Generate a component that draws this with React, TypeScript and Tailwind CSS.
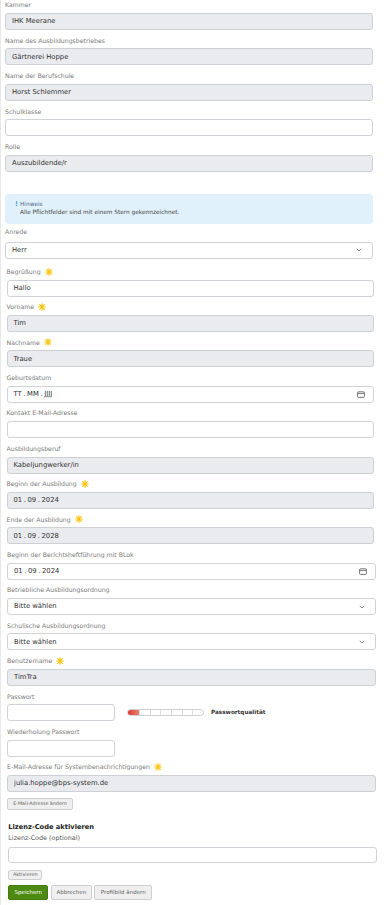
import React from "react";

const FONT = { fontFamily: '"DejaVu Sans", Verdana, sans-serif' };

function Star() {
  return (
    <svg width="8" height="8" viewBox="0 0 16 16" className="ml-[4px]">
      <g stroke="#f6c200" strokeWidth="2.4" strokeLinecap="round">
        <line x1="8" y1="1.5" x2="8" y2="14.5" />
        <line x1="1.5" y1="8" x2="14.5" y2="8" />
        <line x1="3.4" y1="3.4" x2="12.6" y2="12.6" />
        <line x1="12.6" y1="3.4" x2="3.4" y2="12.6" />
      </g>
    </svg>
  );
}

function Chevron() {
  return (
    <svg width="6" height="4" viewBox="0 0 6 4" className="ml-auto mr-[4px]">
      <path d="M0.8 0.8 L3 3 L5.2 0.8" fill="none" stroke="#777" strokeWidth="0.9" />
    </svg>
  );
}

function Calendar() {
  return (
    <svg width="8" height="7" viewBox="0 0 8 7" className="ml-auto mr-[2px]">
      <rect x="0.6" y="0.8" width="6.8" height="5.6" rx="0.8" fill="none" stroke="#555" strokeWidth="0.8" />
      <line x1="0.6" y1="2.4" x2="7.4" y2="2.4" stroke="#555" strokeWidth="0.8" />
    </svg>
  );
}

function Label({ text, star }: { text: string; star?: boolean }) {
  return (
    <div className="h-[10px] flex items-center text-[6.2px] text-[#7a7a7a] whitespace-nowrap">
      {text}
      {star && <Star />}
    </div>
  );
}

function Box({
  value,
  disabled,
  children,
  className = "h-[17px]",
}: {
  value?: React.ReactNode;
  disabled?: boolean;
  children?: React.ReactNode;
  className?: string;
}) {
  return (
    <div
      className={
        "rounded-[3px] border flex items-center px-[6px] text-[6.8px] text-[#333] whitespace-nowrap " +
        (disabled ? "bg-[#e9ebee] border-[#cdd1d5] " : "bg-white border-[#cfd3d7] ") +
        className
      }
    >
      {value}
      {children}
    </div>
  );
}

function DateText({ d, m, y }: { d: string; m: string; y: string }) {
  return (
    <span className="flex gap-[1.6px]">
      <span>{d}</span>
      <span>.</span>
      <span>{m}</span>
      <span>.</span>
      <span>{y}</span>
    </span>
  );
}

function Field({
  label,
  star,
  children,
}: {
  label: string;
  star?: boolean;
  children: React.ReactNode;
}) {
  return (
    <div className="flex flex-col mb-[5.4px]">
      <Label text={label} star={star} />
      <div className="mt-[3px]">{children}</div>
    </div>
  );
}

function StrengthBar() {
  return (
    <div className="ml-[12px] w-[77px] h-[7px] rounded-full border border-[#d0d0d0] bg-white flex overflow-hidden">
      <div className="w-[11px] h-full bg-gradient-to-r from-[#d83a35] to-[#ee7b70]" />
      {[0, 1, 2, 3, 4, 5].map((i) => (
        <div key={i} className="flex-1 h-full border-l border-[#dcdcdc]" />
      ))}
    </div>
  );
}

function GrayButton({ text, className = "" }: { text: string; className?: string }) {
  return (
    <div
      className={
        "flex items-center justify-center rounded-[2px] border border-[#cfcfcf] bg-[#efefef] text-[#666] whitespace-nowrap " +
        className
      }
    >
      {text}
    </div>
  );
}

export default function App() {
  return (
    <div className="min-h-[905px] w-[385px] bg-white relative flex flex-col" style={FONT}>
      <div className="absolute left-0 top-0 bottom-0 w-px bg-[#e8e8e8]" />
      {/* Section A */}
      <div className="ml-[5px] w-[368px] flex flex-col">
        <Field label="Kammer">
          <Box disabled value="IHK Meerane" />
        </Field>
        <Field label="Name des Ausbildungsbetriebes">
          <Box disabled value="Gärtnerei Hoppe" />
        </Field>
        <Field label="Name der Berufschule">
          <Box disabled value="Horst Schlemmer" />
        </Field>
        <Field label="Schulklasse">
          <Box />
        </Field>
        <Field label="Rolle">
          <Box disabled value="Auszubildende/r" />
        </Field>

        <div className="mt-[16.6px] mb-[3px] h-[30px] rounded-[4px] bg-[#e0f1fc] pl-[10px] pt-[7px] text-[5.8px]">
          <div className="h-[8px] flex items-center">
            <span className="w-[5px] text-[#3d9ee0] font-bold text-[6.5px]">!</span>
            <span className="text-[#4d6584]">Hinweis</span>
          </div>
          <div className="h-[8px] flex items-center pl-[5px] text-[#444]">
            Alle Pflichtfelder sind mit einem Stern gekennzeichnet.
          </div>
        </div>

        <div className="flex flex-col mb-[8px]">
          <Label text="Anrede" />
          <div className="mt-[5px]">
            <Box value="Herr">
              <Chevron />
            </Box>
          </div>
        </div>
      </div>

      {/* Section B */}
      <div className="ml-[6.5px] w-[367.5px] flex flex-col">
        <Field label="Begrüßung" star>
          <Box value="Hallo" />
        </Field>
        <Field label="Vorname" star>
          <Box disabled value="Tim" />
        </Field>
        <Field label="Nachname" star>
          <Box disabled value="Traue" />
        </Field>
        <Field label="Geburtsdatum">
          <Box>
            <DateText d="TT" m="MM" y="JJJJ" />
            <Calendar />
          </Box>
        </Field>
        <Field label="Kontakt E-Mail-Adresse">
          <Box />
        </Field>
        <Field label="Ausbildungsberuf">
          <Box disabled value="Kabeljungwerker/in" />
        </Field>
        <Field label="Beginn der Ausbildung" star>
          <Box disabled>
            <DateText d="01" m="09" y="2024" />
          </Box>
        </Field>
        <Field label="Ende der Ausbildung" star>
          <Box disabled>
            <DateText d="01" m="09" y="2028" />
          </Box>
        </Field>
      </div>

      {/* Section C */}
      <div className="ml-[7px] w-[368.7px] flex flex-col">
        <Field label="Beginn der Berichtsheftführung mit BLok">
          <Box>
            <DateText d="01" m="09" y="2024" />
            <Calendar />
          </Box>
        </Field>
        <Field label="Betriebliche Ausbildungsordnung">
          <Box value="Bitte wählen">
            <Chevron />
          </Box>
        </Field>
        <Field label="Schulische Ausbildungsordnung">
          <Box value="Bitte wählen">
            <Chevron />
          </Box>
        </Field>
        <Field label="Benutzername" star>
          <Box disabled value="TimTra" />
        </Field>
        <Field label="Passwort">
          <div className="flex items-center">
            <Box className="h-[17px] w-[108px]" />
            <StrengthBar />
            <span className="ml-[7px] text-[5.7px] font-bold text-[#333]">Passwortqualität</span>
          </div>
        </Field>
        <Field label="Wiederholung Passwort">
          <Box className="h-[17px] w-[108px]" />
        </Field>
        <div className="flex flex-col">
          <Label text="E-Mail-Adresse für Systembenachrichtigungen" star />
          <div className="mt-[3px]">
            <Box disabled value="julia.hoppe@bps-system.de" />
          </div>
        </div>
        <GrayButton text="E-Mail-Adresse ändern" className="mt-[6px] w-[66px] h-[12px] text-[4.8px]" />
      </div>

      {/* Section D */}
      <div className="ml-[8.3px] w-[368.5px] flex flex-col">
        <div className="mt-[12px] h-[10px] flex items-center text-[6.7px] font-bold text-[#222]">
          Lizenz-Code aktivieren
        </div>
        <div className="h-[10px] mt-[2px] flex items-center text-[6.4px] text-[#555]">
          Lizenz-Code (optional)
        </div>
        <div className="mt-[3px]">
          <Box className="h-[16px]" />
        </div>
        <GrayButton text="Aktivieren" className="mt-[7px] w-[34px] h-[10px] text-[4.9px]" />
        <div className="mt-[5px] flex gap-[2.5px]">
          <div className="w-[40px] h-[15px] rounded-[2px] bg-[#4d8a12] border border-[#3f7a0a] text-white text-[5.5px] flex items-center justify-center">
            Speichern
          </div>
          <GrayButton text="Abbrechen" className="w-[41px] h-[15px] text-[5.5px]" />
          <GrayButton text="Profilbild ändern" className="w-[58px] h-[15px] text-[5.5px]" />
        </div>
      </div>
    </div>
  );
}
